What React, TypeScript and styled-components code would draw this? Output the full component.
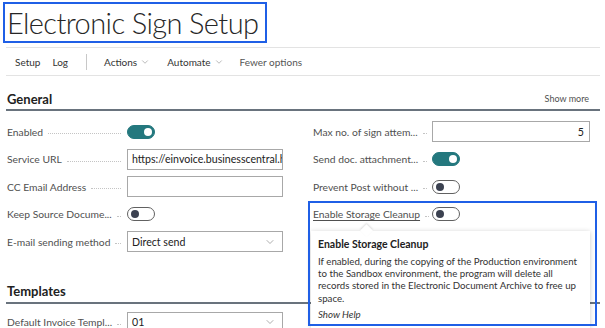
import React from 'react'
import styled, { createGlobalStyle } from 'styled-components'
import { ChevronDown } from 'lucide-react'

const GlobalStyle = createGlobalStyle`
    html, body {
        margin: 0;
        padding: 0;
        background: #ffffff;
    }
    body {
        font-family: "Segoe UI", Lato, "Open Sans", sans-serif;
        color: #212121;
    }
`

const Page = styled.div`
    width: 605px;
    height: 328px;
    overflow: hidden;
    padding: 0 5px 0 6px;
    box-sizing: border-box;
`

const TitleBox = styled.div`
    display: inline-flex;
    align-items: center;
    box-sizing: border-box;
    height: 41px;
    margin: 2px 0 0 -3px;
    padding: 0 7px 0 2px;
    border: 2px solid #1f5fe6;
`

const Title = styled.h1`
    margin: 0;
    font-size: 29px;
    font-weight: 300;
    letter-spacing: -0.6px;
    color: #262626;
    line-height: 1;
`

const ActionBar = styled.div`
    display: flex;
    align-items: center;
    height: 27px;
    margin-top: 4px;
    padding-left: 9px;
    border-top: 1px solid #e3e3e3;
    border-bottom: 1px solid #e3e3e3;
    font-size: 10px;
    color: #333;
`

const Action = styled.span<{ $gap?: number; $muted?: boolean }>`
    display: inline-flex;
    align-items: center;
    gap: 3px;
    margin-right: ${(p) => p.$gap ?? 12}px;
    color: ${(p) => (p.$muted ? '#555' : '#333')};
`

const Divider = styled.span`
    width: 1px;
    height: 16px;
    background: #c8c8c8;
    margin: 0 17px 0 6px;
`

const Section = styled.section<{ $top: number }>`
    margin-top: ${(p) => p.$top}px;
`

const SectionHeader = styled.div`
    display: flex;
    align-items: center;
    justify-content: space-between;
    height: 21px;
    padding: 0 11px 0 1px;
    border-bottom: 2px solid #69737d;
`

const SectionTitle = styled.h2`
    margin: 0;
    font-size: 13px;
    font-weight: 700;
    color: #212121;
`

const ShowMore = styled.span`
    font-size: 9px;
    color: #505050;
`

const Columns = styled.div<{ $top?: number }>`
    display: grid;
    grid-template-columns: 276px 277px;
    column-gap: 30px;
    padding: ${(p) => p.$top ?? 7}px 10px 0 1px;
`

const Column = styled.div`
    display: flex;
    flex-direction: column;
`

const Row = styled.div<{ $labelWidth?: number }>`
    display: grid;
    grid-template-columns: ${(p) => p.$labelWidth ?? 120}px minmax(0, 1fr);
    align-items: center;
    height: 27.5px;
`

const Label = styled.div`
    display: flex;
    align-items: center;
    min-width: 0;
    padding-right: 6px;
    font-size: 10.3px;
    color: #505050;
`

const LabelText = styled.span<{ $link?: boolean }>`
    white-space: nowrap;
    text-decoration: ${(p) => (p.$link ? 'underline' : 'none')};
    text-underline-offset: 2px;
`

const Leader = styled.span`
    flex: 1;
    min-width: 4px;
    margin: 4px 0 0 5px;
    border-bottom: 1px dotted #c4c4c4;
`

const Control = styled.div`
    min-width: 0;
`

const Input = styled.div<{ $align?: string }>`
    display: flex;
    align-items: center;
    justify-content: ${(p) => (p.$align === 'right' ? 'flex-end' : 'flex-start')};
    box-sizing: border-box;
    height: 21px;
    padding: 0 5px 0 4px;
    border: 1px solid #a8a8a8;
    font-size: 10.6px;
    color: #212121;
    white-space: nowrap;
    overflow: hidden;
`

const Select = styled(Input)`
    justify-content: space-between;
    padding-right: 6px;
`

const Toggle = styled.div<{ $on?: boolean }>`
    position: relative;
    box-sizing: border-box;
    width: 28px;
    height: 14px;
    border-radius: 7px;
    border: 1px solid ${(p) => (p.$on ? '#24787e' : '#616161')};
    background: ${(p) => (p.$on ? '#24787e' : '#ffffff')};

    &::after {
        content: '';
        position: absolute;
        top: 2px;
        left: ${(p) => (p.$on ? '16px' : '3px')};
        width: 8px;
        height: 8px;
        border-radius: 50%;
        background: ${(p) => (p.$on ? '#ffffff' : '#3b4150')};
    }
`

const Highlighted = styled.div`
    position: relative;
    z-index: 2;
`

const HighlightFrame = styled.div`
    position: absolute;
    left: -5px;
    right: -7px;
    top: 0;
    height: 125px;
    border: 2px solid #1f5fe6;
    box-sizing: border-box;
    pointer-events: none;
    z-index: 3;
`

const Tooltip = styled.div`
    position: absolute;
    left: -2px;
    top: 30px;
    width: 279px;
    box-sizing: border-box;
    padding: 7px 4px 8px 7px;
    background: #ffffff;
    box-shadow: 0 1px 5px rgba(0, 0, 0, 0.22);
    z-index: 2;

    &::before {
        content: '';
        position: absolute;
        top: -5px;
        left: 51px;
        width: 9px;
        height: 9px;
        background: #ffffff;
        transform: rotate(45deg);
        box-shadow: -1px -1px 2px rgba(0, 0, 0, 0.12);
    }
`

const TipTitle = styled.div`
    position: relative;
    font-size: 10.5px;
    line-height: 13px;
    font-weight: 700;
    color: #212121;
    margin-bottom: 4.5px;
`

const TipBody = styled.p`
    margin: 0;
    font-size: 9.7px;
    line-height: 12.2px;
    color: #333;
    white-space: nowrap;
`

const TipHelp = styled.div`
    margin-top: 4px;
    font-size: 9.7px;
    line-height: 12px;
    font-style: italic;
    color: #333;
`

function Chevron({ size = 12 }: { size?: number }) {
    return <ChevronDown size={size} strokeWidth={1.2} color="#777" />
}

function Field({
    label,
    children,
    labelWidth,
    link,
}: {
    label: string
    children: React.ReactNode
    labelWidth?: number
    link?: boolean
}) {
    return (
        <Row $labelWidth={labelWidth}>
            <Label>
                <LabelText $link={link}>{label}</LabelText>
                <Leader />
            </Label>
            <Control>{children}</Control>
        </Row>
    )
}

export default function App() {
    return (
        <>
            <GlobalStyle />
            <Page>
                <TitleBox>
                    <Title>Electronic Sign Setup</Title>
                </TitleBox>

                <ActionBar>
                    <Action>Setup</Action>
                    <Action>Log</Action>
                    <Divider />
                    <Action $gap={17}>
                        Actions <Chevron size={10} />
                    </Action>
                    <Action $gap={16}>
                        Automate <Chevron size={10} />
                    </Action>
                    <Action $muted>Fewer options</Action>
                </ActionBar>

                <Section $top={12}>
                    <SectionHeader>
                        <SectionTitle>General</SectionTitle>
                        <ShowMore>Show more</ShowMore>
                    </SectionHeader>
                    <Columns>
                        <Column>
                            <Field label="Enabled">
                                <Toggle $on />
                            </Field>
                            <Field label="Service URL">
                                <Input>https://einvoice.businesscentral.hu</Input>
                            </Field>
                            <Field label="CC Email Address">
                                <Input />
                            </Field>
                            <Field label="Keep Source Docume...">
                                <Toggle />
                            </Field>
                            <Field label="E-mail sending method">
                                <Select>
                                    Direct send <Chevron />
                                </Select>
                            </Field>
                        </Column>
                        <Column>
                            <Field label="Max no. of sign attem..." labelWidth={119}>
                                <Input $align="right">5</Input>
                            </Field>
                            <Field label="Send doc. attachment..." labelWidth={119}>
                                <Toggle $on />
                            </Field>
                            <Field label="Prevent Post without ..." labelWidth={119}>
                                <Toggle />
                            </Field>
                            <Highlighted>
                                <HighlightFrame />
                                <Field label="Enable Storage Cleanup" labelWidth={119} link>
                                    <Toggle />
                                </Field>
                                <Tooltip>
                                    <TipTitle>Enable Storage Cleanup</TipTitle>
                                    <TipBody>
                                        If enabled, during the copying of the Production environment
                                        <br />
                                        to the Sandbox environment, the program will delete all
                                        <br />
                                        records stored in the Electronic Document Archive to free up
                                        <br />
                                        space.
                                    </TipBody>
                                    <TipHelp>Show Help</TipHelp>
                                </Tooltip>
                            </Highlighted>
                        </Column>
                    </Columns>
                </Section>

                <Section $top={25}>
                    <SectionHeader>
                        <SectionTitle>Templates</SectionTitle>
                    </SectionHeader>
                    <Columns $top={5}>
                        <Column>
                            <Field label="Default Invoice Templ...">
                                <Select>
                                    01 <Chevron />
                                </Select>
                            </Field>
                        </Column>
                    </Columns>
                </Section>
            </Page>
        </>
    )
}
